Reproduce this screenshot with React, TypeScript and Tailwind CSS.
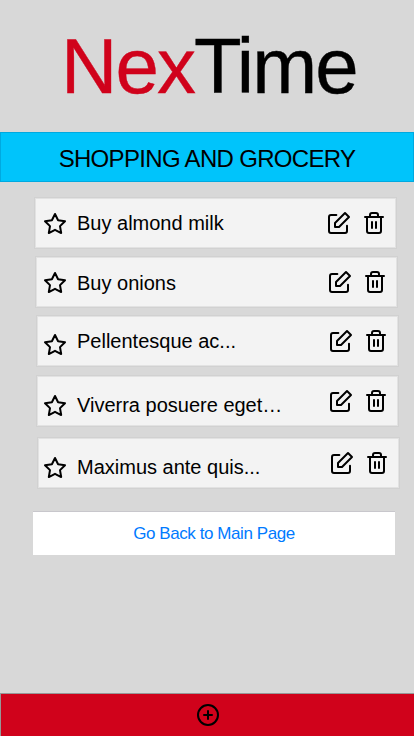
type IconProps = { className?: string };

const iconBase = {
  width: 24,
  height: 24,
  viewBox: '0 0 24 24',
  fill: 'none',
  stroke: 'currentColor',
  strokeWidth: 2,
  strokeLinecap: 'round' as const,
  strokeLinejoin: 'round' as const,
};

function StarIcon({ className }: IconProps) {
  return (
    <svg {...iconBase} className={className}>
      <polygon points="12 2 15.09 8.26 22 9.27 17 14.14 18.18 21.02 12 17.77 5.82 21.02 7 14.14 2 9.27 8.91 8.26 12 2" />
    </svg>
  );
}

function EditIcon() {
  return (
    <svg {...iconBase}>
      <path d="M20 14.66V20a2 2 0 0 1-2 2H4a2 2 0 0 1-2-2V6a2 2 0 0 1 2-2h5.34" />
      <polygon points="18 2 22 6 12 16 8 16 8 12 18 2" />
    </svg>
  );
}

function TrashIcon() {
  return (
    <svg {...iconBase}>
      <polyline points="3 6 5 6 21 6" />
      <path d="M19 6v14a2 2 0 0 1-2 2H7a2 2 0 0 1-2-2V6m3 0V4a2 2 0 0 1 2-2h4a2 2 0 0 1 2 2v2" />
      <path d="M10 11v6M14 11v6" />
    </svg>
  );
}

function PlusCircleIcon() {
  return (
    <svg {...iconBase}>
      <circle cx="12" cy="12" r="10" />
      <path d="M12 8v8M8 12h8" />
    </svg>
  );
}

const items = [
  { text: 'Buy almond milk', row: 'ml-[34px] pl-2', star: 'mt-[14px]', label: 'mt-[13px]' },
  { text: 'Buy onions', row: 'mt-[7px] ml-[35px] pl-[7px]', star: 'mt-[14px]', label: 'mt-[14px]' },
  { text: 'Pellentesque ac...', row: 'mt-[7px] ml-[36px] pl-[6px]', star: 'mt-[17px]', label: 'mt-[13px]' },
  { text: 'Viverra posuere eget…', row: 'mt-[8px] ml-[36px] pl-[6px]', star: 'mt-[18px]', label: 'mt-[17px]' },
  { text: 'Maximus ante quis...', row: 'mt-[10px] ml-[37px] pl-[5px]', star: 'mt-[18px]', label: 'mt-[17px]' },
];

export default function App() {
  return (
    <div className="flex h-[736px] w-[414px] flex-col overflow-hidden bg-[#d8d8d8] font-['Liberation_Sans',Arial,sans-serif] text-black">
      <h1 className="h-[132px] shrink-0 pt-[22px] pl-[61px] text-[78px] leading-[88px] tracking-[-1.9px] whitespace-nowrap [-webkit-text-stroke:0.4px]">
        <span className="text-[#d0021b]">Nex</span>
        <span>Time</span>
      </h1>
      <h2 className="flex h-[50px] shrink-0 items-center justify-center border border-[#00a9e0] bg-[#00c4fb] pt-[4px] text-[24px] tracking-[-0.68px] whitespace-nowrap">
        SHOPPING AND GROCERY
      </h2>
      <ul className="mt-[15px] flex flex-col">
        {items.map((item) => (
          <li
            key={item.text}
            className={`flex h-[52px] w-[363px] items-start border border-[#d1d1d1] bg-[#f3f3f3] shadow-[inset_0_0_0_1px_#e2e2e2] ${item.row}`}
          >
            <StarIcon className={item.star} />
            <span className={`ml-[10px] text-[20px] leading-[24px] whitespace-nowrap ${item.label}`}>{item.text}</span>
            <div className="mt-[13px] mr-[10px] ml-auto flex gap-[11px]">
              <EditIcon />
              <TrashIcon />
            </div>
          </li>
        ))}
      </ul>
      <button className="mt-[22px] ml-[33px] flex h-[44px] w-[362px] shrink-0 items-center justify-center border-t border-[#c8c7cc] bg-white text-[17px] tracking-[-0.42px] text-[#007aff]">
        Go Back to Main Page
      </button>
      <footer className="mt-auto flex h-[43px] shrink-0 items-center justify-center border-t border-l border-[#979797] bg-[#d0021b]">
        <PlusCircleIcon />
      </footer>
    </div>
  );
}
